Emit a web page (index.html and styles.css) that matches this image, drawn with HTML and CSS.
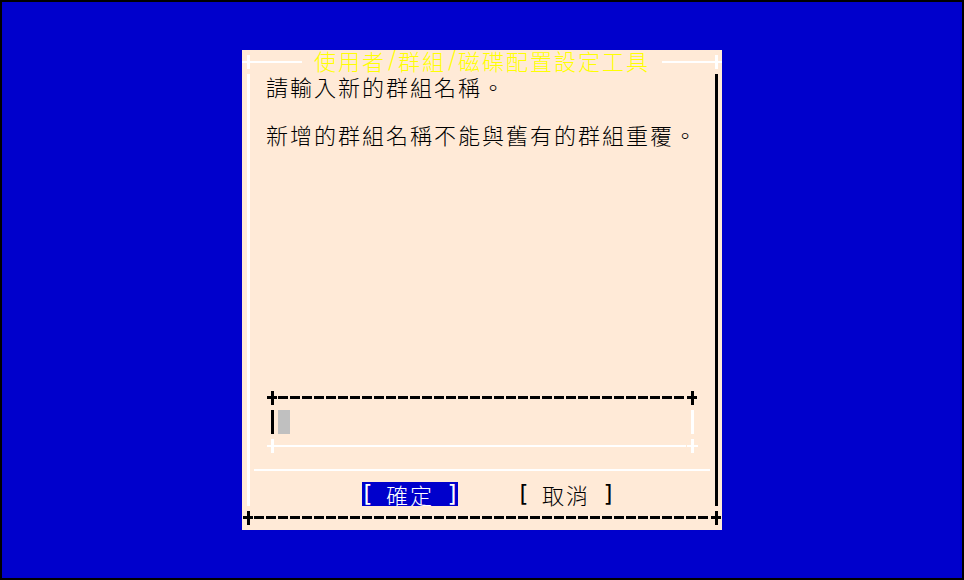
FILE: index.html
```html
<!DOCTYPE html>
<html lang="zh-Hant">
<head>
<meta charset="utf-8">
<title>使用者/群組/磁碟配置設定工具</title>
<link rel="stylesheet" href="styles.css">
</head>
<body>
<div class="screen">
  <div class="dialog">
    <div class="row top">
      <span class="plus plus-w"></span>
      <span class="hline-w w4"></span>
      <span class="gap1"></span>
      <span class="title"><span class="cj">使用者</span><span class="hw slash">/</span><span class="cj">群組</span><span class="hw slash">/</span><span class="cj">磁碟配置設定工具</span></span>
      <span class="gap1"></span>
      <span class="hline-w w4"></span>
      <span class="plus plus-w"></span>
    </div>
    <div class="body">
      <div class="inner">
        <div class="row text"><span class="cj">請輸入新的群組名稱。</span></div>
        <div class="row"></div>
        <div class="row text"><span class="cj">新增的群組名稱不能與舊有的群組重覆。</span></div>
        <div class="spacer"></div>
        <div class="row box">
          <span class="plus plus-k"></span>
          <span class="dashes"></span>
          <span class="plus plus-k"></span>
        </div>
        <div class="row box">
          <span class="vbar vbar-k"></span>
          <span class="cursor"></span>
          <span class="fill"></span>
          <span class="vbar vbar-w"></span>
        </div>
        <div class="row box">
          <span class="plus plus-w2"></span>
          <span class="hline-w fill"></span>
          <span class="plus plus-w2"></span>
        </div>
        <div class="row sep"></div>
        <div class="row buttons">
          <div class="btn active"><span class="hw br">[</span><span class="sp"></span><span class="cj">確定</span><span class="sp"></span><span class="hw br">]</span></div>
          <div class="btn"><span class="hw br">[</span><span class="sp"></span><span class="cj">取消</span><span class="sp"></span><span class="hw br">]</span></div>
        </div>
      </div>
    </div>
    <div class="row bottom">
      <span class="plus plus-k"></span>
      <span class="dashes"></span>
      <span class="plus plus-k"></span>
    </div>
  </div>
</div>
</body>
</html>
```

FILE: styles.css
```css
html, body {
  margin: 0;
  padding: 0;
}
body {
  background: #000;
  padding: 2px;
  width: 960px;
  height: 576px;
  font-family: "Noto Sans CJK TC", "Noto Sans CJK SC", sans-serif;
  font-weight: 300;
  font-size: 22px;
  line-height: 24px;
  color: #000;
}
.screen {
  width: 960px;
  height: 576px;
  background: #0000cc;
  padding: 48px 0 0 240px;
  box-sizing: border-box;
}
.dialog {
  width: 480px;
  height: 480px;
  background: #ffead7;
  display: flex;
  flex-direction: column;
}
.row {
  height: 24px;
  display: flex;
  align-items: flex-start;
}
.cj {
  letter-spacing: 2px;
  white-space: nowrap;
}
.hw {
  display: inline-block;
  width: 12px;
  text-align: center;
  letter-spacing: 0;
}
.slash {
  font-family: "DejaVu Sans", sans-serif;
  font-size: 24px;
  line-height: 20px;
}
.br {
  font-family: "DejaVu Sans", sans-serif;
  font-weight: 400;
  font-size: 23px;
  line-height: 24px;
}
.sp {
  display: inline-block;
  width: 12px;
}
.gap1 { width: 12px; flex: none; }
.w4 { width: 48px; flex: none; height: 24px; }
.fill { flex: 1; height: 24px; }

.plus {
  width: 12px;
  height: 24px;
  flex: none;
}
.plus-k {
  background:
    linear-gradient(#000, #000) 1px 10px / 10px 3px no-repeat,
    linear-gradient(#000, #000) 5px 5px / 3px 14px no-repeat;
}
.plus-w {
  background:
    linear-gradient(#fff, #fff) 0 11px / 12px 2px no-repeat,
    linear-gradient(#fff, #fff) 5px 5px / 3px 14px no-repeat;
}
.plus-w2 {
  background:
    linear-gradient(#fff, #fff) 1px 11px / 11px 2px no-repeat,
    linear-gradient(#fff, #fff) 5px 5px / 3px 14px no-repeat;
}
.hline-w {
  height: 24px;
  background: linear-gradient(#fff, #fff) 0 11px / 100% 2px no-repeat;
}
.dashes {
  flex: 1;
  height: 24px;
  background: repeating-linear-gradient(to right, #000 0 10px, transparent 10px 12px) 0 10px / 100% 3px no-repeat;
}
.vbar {
  width: 12px;
  height: 24px;
  flex: none;
}
.vbar-k { background: linear-gradient(#000, #000) 5px 0 / 3px 100% no-repeat; }
.vbar-w { background: linear-gradient(#fff, #fff) 5px 0 / 3px 100% no-repeat; }
.cursor {
  width: 12px;
  height: 24px;
  flex: none;
  background: #c0c0c0;
}

.title {
  color: #ffff00;
  line-height: 20px;
  white-space: nowrap;
  display: flex;
}

.body {
  height: 432px;
  padding: 0 12px;
  background:
    linear-gradient(#fff, #fff) 5px 0 / 3px 100% no-repeat,
    linear-gradient(#000, #000) 473px 0 / 3px 100% no-repeat;
}
.inner {
  width: 456px;
  display: flex;
  flex-direction: column;
}
.text {
  padding-left: 12px;
}
.spacer {
  height: 240px;
}
.box {
  margin-left: 12px;
  width: 432px;
}
.sep {
  background: linear-gradient(#fff, #fff) 0 11px / 100% 2px no-repeat;
}
.buttons {
  padding-left: 108px;
  gap: 60px;
}
.btn {
  display: flex;
  width: 96px;
  height: 24px;
  white-space: nowrap;
}
.btn.active {
  background: #0000cc;
  color: #fff;
}
```
